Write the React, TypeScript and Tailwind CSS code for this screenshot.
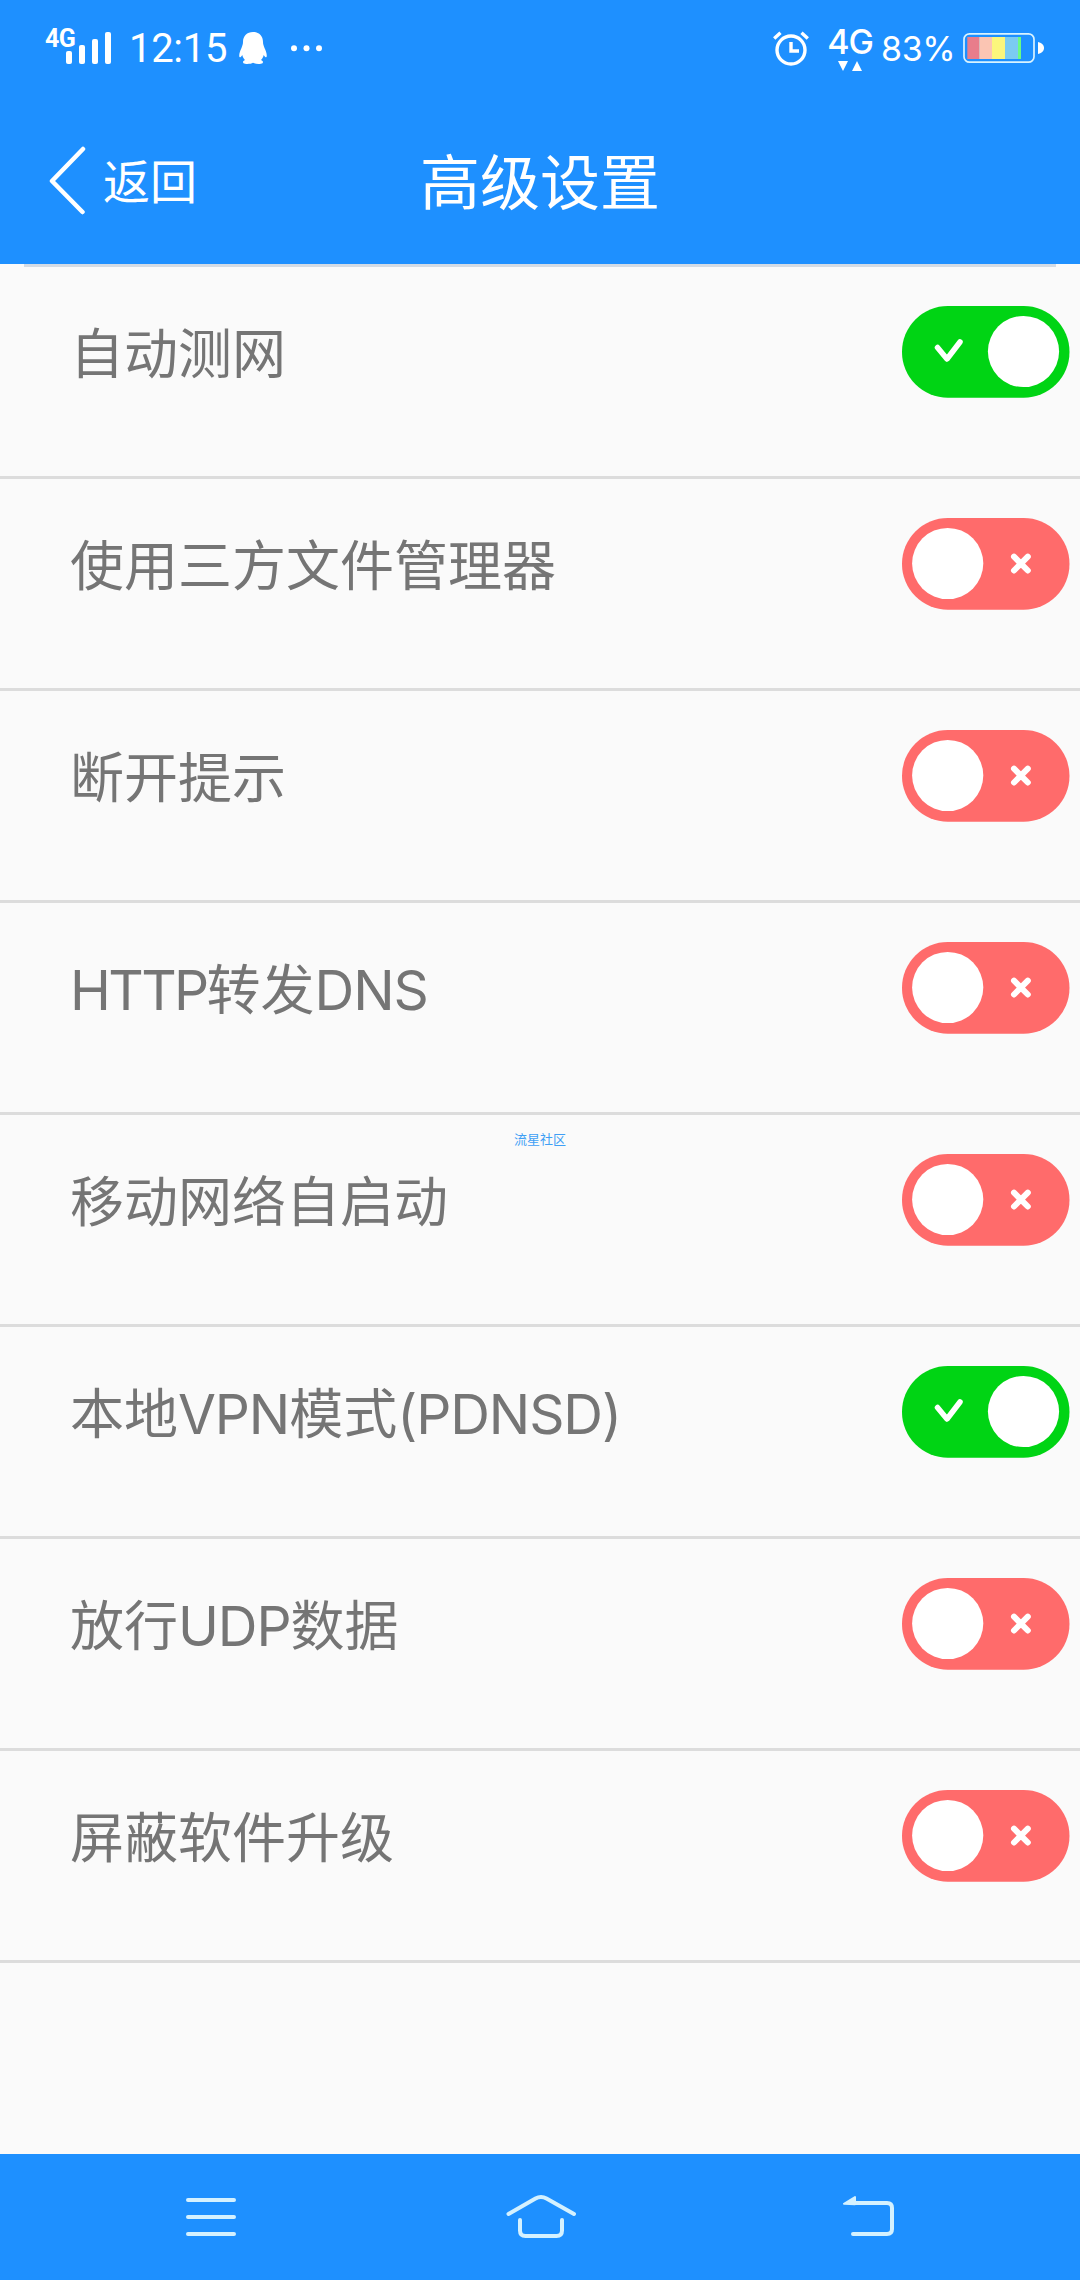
import React, { useState } from 'react';

interface Setting {
  id: string;
  label: string;
  enabled: boolean;
}

const initialSettings: Setting[] = [
  { id: 'auto-test', label: '自动测网', enabled: true },
  { id: 'file-manager', label: '使用三方文件管理器', enabled: false },
  { id: 'disconnect-tip', label: '断开提示', enabled: false },
  { id: 'http-dns', label: 'HTTP转发DNS', enabled: false },
  { id: 'auto-start', label: '移动网络自启动', enabled: false },
  { id: 'local-vpn', label: '本地VPN模式(PDNSD)', enabled: true },
  { id: 'udp', label: '放行UDP数据', enabled: false },
  { id: 'block-update', label: '屏蔽软件升级', enabled: false },
];

function StatusBar() {
  return (
    <div className="flex h-24 items-start justify-between pl-[46px] pr-9 text-white">
      <div className="flex">
        <div className="relative mt-8 h-8 w-[65px]">
          <span className="absolute -left-px -top-[5px] font-[Roboto,sans-serif] text-[25px] font-bold leading-6 tracking-[-0.5px]">4G</span>
          <svg className="h-8 w-[65px]" viewBox="0 0 65 32" fill="currentColor">
            <rect x="20" y="19" width="6" height="13" rx="2" />
            <rect x="33" y="13" width="6" height="19" rx="2" />
            <rect x="46" y="7" width="6" height="25" rx="2" />
            <rect x="59" y="0" width="6" height="32" rx="2" />
          </svg>
        </div>
        <span className="ml-[18px] mt-[25px] w-[100px] whitespace-nowrap font-[Roboto,sans-serif] text-[40px] leading-[48px] tracking-[-0.3px]">12:15</span>
        <svg className="ml-[10px] mt-8 h-8 w-7" viewBox="0 0 28 32" fill="currentColor">
          <path d="M14 0C8 0 4 4 4 10c0 2-.6 3.500-1.500 6C1 19 0 22 .3 24.500c.3 1.500 1.600.6 3-1.600.4 2 1.400 3.700 2.700 5-1.800.6-2.600 2.100-1.500 3.300 1.500 1.200 7.500 1 9.500-.4 2 1.400 8 1.600 9.500.4 1.100-1.200.3-2.700-1.500-3.300 1.300-1.300 2.300-3 2.700-5 1.400 2.200 2.700 3.100 3 1.600.3-2.500-.7-5.500-2.200-8.500C24.600 13.500 24 12 24 10 24 4 20 0 14 0z" />
        </svg>
        <svg className="ml-[23px] mt-11 h-2 w-8" viewBox="0 0 32 8" fill="currentColor">
          <circle cx="4" cy="4.300" r="3" />
          <circle cx="16.500" cy="4.300" r="3" />
          <circle cx="29" cy="4.300" r="3" />
        </svg>
      </div>

      <div className="flex">
        <svg className="mt-[31px] h-[35px] w-9" viewBox="0 0 36 35" fill="none" stroke="currentColor" strokeWidth="3.400">
          <circle cx="18" cy="19" r="14" />
          <path d="M18 11v9h8" />
          <path d="M1.200 7.500L7.500 1.800M34.800 7.500L28.500 1.800" />
        </svg>
        <div className="ml-[19px] mt-6 flex w-[44px] flex-col items-center">
          <span className="text-[34px] font-medium leading-9 tracking-[-1px]">4G</span>
          <svg className="mt-px h-[10px] w-6" viewBox="0 0 24 10" fill="currentColor">
            <path d="M0 0h10L5 10zM14 10h10L19 0z" />
          </svg>
        </div>
        <span className="ml-[9px] mt-7 w-[74px] whitespace-nowrap text-[34px] leading-[42px] tracking-[-0.4px]">83%</span>
        <svg className="ml-[7px] mt-8 h-8 w-[82px]" viewBox="0 0 82 32">
          <rect x="2" y="1.800" width="70" height="28.400" rx="5.500" fill="none" stroke="#d9f3ff" strokeWidth="1.700" />
          <rect x="5.300" y="5" width="12" height="22" fill="#e87d8b" />
          <rect x="17.200" y="5" width="13" height="22" fill="#fbc5b3" />
          <rect x="30" y="5" width="13" height="22" fill="#fbf67c" />
          <rect x="43" y="5" width="13" height="22" fill="#7bcbf2" />
          <rect x="56" y="5" width="3" height="22" fill="#6cfb83" />
          <path d="M76 10c4.500 1 6 3.500 6 6s-1.500 5-6 6z" fill="#fff" />
        </svg>
      </div>
    </div>
  );
}

function Header() {
  return (
    <header className="grid h-[168px] grid-cols-3 text-white">
      <button className="flex items-start pl-12 text-left">
        <svg className="mt-[49px] h-[70px] w-10" viewBox="0 0 40 70" fill="none" stroke="currentColor" strokeWidth="4.500" strokeLinecap="round" strokeLinejoin="round">
          <path d="M35 4L4 36L34.500 67" />
        </svg>
        <span className="ml-[15px] mt-[54px] text-[47px] leading-[64px]">返回</span>
      </button>
      <h1 className="mt-[47px] text-center text-[60px] leading-[80px]">高级设置</h1>
    </header>
  );
}

// Latin runs are set slightly larger than the Chinese characters around them
function Label({ text }: { text: string }) {
  return (
    <span className="mt-[9px] whitespace-nowrap text-[54px] leading-[80px] text-[#757575]">
      {text.split(/([A-Z()]+)/).map((part, i) =>
        i % 2 ? (
          <span
            key={i}
            className={`text-[55px] leading-[60px] ${part === 'HTTP' ? 'tracking-[-2.6px]' : 'tracking-[-1.1px]'}`}
          >
            {part}
          </span>
        ) : (
          part
        )
      )}
    </span>
  );
}

function Toggle({ enabled, onToggle }: { enabled: boolean; onToggle: () => void }) {
  return (
    <button role="switch" aria-checked={enabled} onClick={onToggle} className="h-[92px] w-[168px]">
      <svg className="h-[92px] w-[168px]" viewBox="0 0 168 92">
        <rect width="167.500" height="91.700" rx="45.800" fill={enabled ? '#00d414' : '#ff6b6b'} />
        <circle cx={enabled ? 121.5 : 45.7} cy="45.500" r="35.600" fill="#fff" />
        {enabled ? (
          <path d="M35.500 41.500l9.500 11.500L58 36" fill="none" stroke="#fff" strokeWidth="5.500" strokeLinecap="round" strokeLinejoin="round" />
        ) : (
          <path d="M112 38.700l13.800 13.800M125.800 38.700l-13.800 13.800" fill="none" stroke="#fff" strokeWidth="6" strokeLinecap="round" />
        )}
      </svg>
    </button>
  );
}

function NavBar() {
  return (
    <nav className="flex h-[126px] items-start bg-[#1e90ff] pt-10 text-[#d4f1ff]">
      <svg className="ml-[184px] h-12 w-[54px]" viewBox="0 0 54 48" fill="none" stroke="currentColor" strokeWidth="4" strokeLinecap="round">
        <path d="M4 6h46M4 23h46M4 40h46" />
      </svg>
      <svg className="ml-[267px] h-12 w-[72px]" viewBox="0 0 72 48" fill="none" stroke="currentColor" strokeWidth="4" strokeLinecap="round">
        <path d="M3.500 20L30.500 4.500q5.500-3 11 0L69 20" />
        <path d="M15 26v10.500q0 5.500 5.500 5.500h31q5.500 0 5.500-5.500V26" />
      </svg>
      <svg className="ml-[263px] h-12 w-14" viewBox="0 0 56 48" fill="none" stroke="currentColor" strokeWidth="4" strokeLinecap="round">
        <path d="M14 9h33q5 0 5 5v21q0 5-5 5H13" />
        <path d="M4 9.800L15 3v7.200z" fill="currentColor" strokeWidth="2" strokeLinejoin="round" />
      </svg>
    </nav>
  );
}

export default function App() {
  const [settings, setSettings] = useState<Setting[]>(initialSettings);

  const toggleSetting = (id: string) => {
    setSettings((prev) =>
      prev.map((item) => (item.id === id ? { ...item, enabled: !item.enabled } : item))
    );
  };

  return (
    <div className="relative flex h-[2280px] w-[1080px] flex-col overflow-hidden bg-[#fafafa] font-[Inter,'Noto_Sans_CJK_SC',sans-serif]">
      <div className="bg-[#1e90ff]">
        <StatusBar />
        <Header />
      </div>

      <main className="flex-1">
        <div className="mx-6 h-[3px] bg-[#d3dbe5]" />
        {settings.map((item) => (
          <div key={item.id} className="flex h-[212px] items-start justify-between border-b-[3px] border-[#dcdcdc] pl-[70px] pr-[10px] pt-[39px]">
            <Label text={item.label} />
            <Toggle enabled={item.enabled} onToggle={() => toggleSetting(item.id)} />
          </div>
        ))}
      </main>

      <NavBar />

      {/* floating community mark */}
      <span className="absolute left-[514px] top-[1129px] text-[13px] leading-5 text-[#3f9ff5]">流星社区</span>
    </div>
  );
}
